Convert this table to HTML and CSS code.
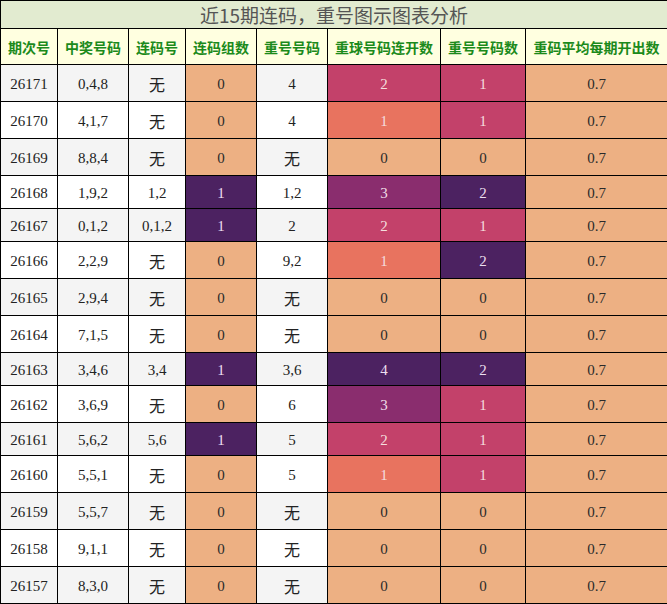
FILE: index.html
```html
<!DOCTYPE html>
<html lang="zh">
<head>
<meta charset="utf-8">
<title>近15期连码，重号图示图表分析</title>
<link rel="stylesheet" href="styles.css">
</head>
<body>
<table class="chart">
  <colgroup>
    <col class="c1"><col class="c2"><col class="c3"><col class="c4">
    <col class="c5"><col class="c6"><col class="c7"><col class="c8">
  </colgroup>
  <thead>
    <tr class="title-row"><th colspan="8">近15期连码，重号图示图表分析</th></tr>
    <tr class="head-row">
      <th>期次号</th><th>中奖号码</th><th>连码号</th><th>连码组数</th>
      <th>重号号码</th><th>重球号码连开数</th><th>重号号码数</th><th>重码平均每期开出数</th>
    </tr>
  </thead>
  <tbody>
    <tr><td>26171</td><td>0,4,8</td><td class="cn">无</td><td class="h0">0</td><td>4</td><td class="h2">2</td><td class="h2">1</td><td class="h0">0.7</td></tr>
    <tr><td>26170</td><td>4,1,7</td><td class="cn">无</td><td class="h0">0</td><td>4</td><td class="h1">1</td><td class="h2">1</td><td class="h0">0.7</td></tr>
    <tr><td>26169</td><td>8,8,4</td><td class="cn">无</td><td class="h0">0</td><td class="cn">无</td><td class="h0">0</td><td class="h0">0</td><td class="h0">0.7</td></tr>
    <tr><td>26168</td><td>1,9,2</td><td>1,2</td><td class="h4">1</td><td>1,2</td><td class="h3">3</td><td class="h4">2</td><td class="h0">0.7</td></tr>
    <tr><td>26167</td><td>0,1,2</td><td>0,1,2</td><td class="h4">1</td><td>2</td><td class="h2">2</td><td class="h2">1</td><td class="h0">0.7</td></tr>
    <tr><td>26166</td><td>2,2,9</td><td class="cn">无</td><td class="h0">0</td><td>9,2</td><td class="h1">1</td><td class="h4">2</td><td class="h0">0.7</td></tr>
    <tr><td>26165</td><td>2,9,4</td><td class="cn">无</td><td class="h0">0</td><td class="cn">无</td><td class="h0">0</td><td class="h0">0</td><td class="h0">0.7</td></tr>
    <tr><td>26164</td><td>7,1,5</td><td class="cn">无</td><td class="h0">0</td><td class="cn">无</td><td class="h0">0</td><td class="h0">0</td><td class="h0">0.7</td></tr>
    <tr><td>26163</td><td>3,4,6</td><td>3,4</td><td class="h4">1</td><td>3,6</td><td class="h4">4</td><td class="h4">2</td><td class="h0">0.7</td></tr>
    <tr><td>26162</td><td>3,6,9</td><td class="cn">无</td><td class="h0">0</td><td>6</td><td class="h3">3</td><td class="h2">1</td><td class="h0">0.7</td></tr>
    <tr><td>26161</td><td>5,6,2</td><td>5,6</td><td class="h4">1</td><td>5</td><td class="h2">2</td><td class="h2">1</td><td class="h0">0.7</td></tr>
    <tr><td>26160</td><td>5,5,1</td><td class="cn">无</td><td class="h0">0</td><td>5</td><td class="h1">1</td><td class="h2">1</td><td class="h0">0.7</td></tr>
    <tr><td>26159</td><td>5,5,7</td><td class="cn">无</td><td class="h0">0</td><td class="cn">无</td><td class="h0">0</td><td class="h0">0</td><td class="h0">0.7</td></tr>
    <tr><td>26158</td><td>9,1,1</td><td class="cn">无</td><td class="h0">0</td><td class="cn">无</td><td class="h0">0</td><td class="h0">0</td><td class="h0">0.7</td></tr>
    <tr><td>26157</td><td>8,3,0</td><td class="cn">无</td><td class="h0">0</td><td class="cn">无</td><td class="h0">0</td><td class="h0">0</td><td class="h0">0.7</td></tr>
  </tbody>
</table>
</body>
</html>
```

FILE: styles.css
```css
html, body {
  margin: 0;
  padding: 0;
  background: #ffffff;
}

.chart {
  width: 667px;
  border-collapse: collapse;
  table-layout: fixed;
  font-family: "Liberation Serif", "Noto Sans CJK SC", serif;
  font-size: 15px;
  color: #222;
}

.c1 { width: 57px; }
.c2 { width: 71px; }
.c3 { width: 57px; }
.c4 { width: 71px; }
.c5 { width: 71px; }
.c6 { width: 113px; }
.c7 { width: 85px; }
.c8 { width: 142px; }

.chart th,
.chart td {
  border: 1px solid #000;
  text-align: center;
  padding: 0;
}

.title-row th {
  height: 27px;
  background: #e2ebd0;
  color: #555;
  font-family: "Noto Sans CJK SC", sans-serif;
  font-weight: normal;
  font-size: 19px;
  line-height: 27px;
}

.head-row th {
  height: 35px;
  background: #ffffe0;
  color: #1b8a1b;
  font-family: "Noto Sans CJK SC", sans-serif;
  font-weight: bold;
  font-size: 14px;
  line-height: 20px;
}

.chart td {
  padding: 8px 0 6px;
  line-height: 18px;
}

.chart td.cn {
  font-family: "Noto Sans CJK SC", sans-serif;
  font-size: 16px;
  line-height: 22px;
}

.chart tbody tr:nth-child(odd) { background: #f4f4f4; }
.chart tbody tr:nth-child(even) { background: #ffffff; }

.chart td.h0 { background: #edb083; color: #2a2a2a; }
.chart td.h1 { background: #e8735f; color: #f5dede; }
.chart td.h2 { background: #c3416a; color: #f5dede; }
.chart td.h3 { background: #8a2d6e; color: #f0dde8; }
.chart td.h4 { background: #4c2261; color: #ecdff0; }
```
